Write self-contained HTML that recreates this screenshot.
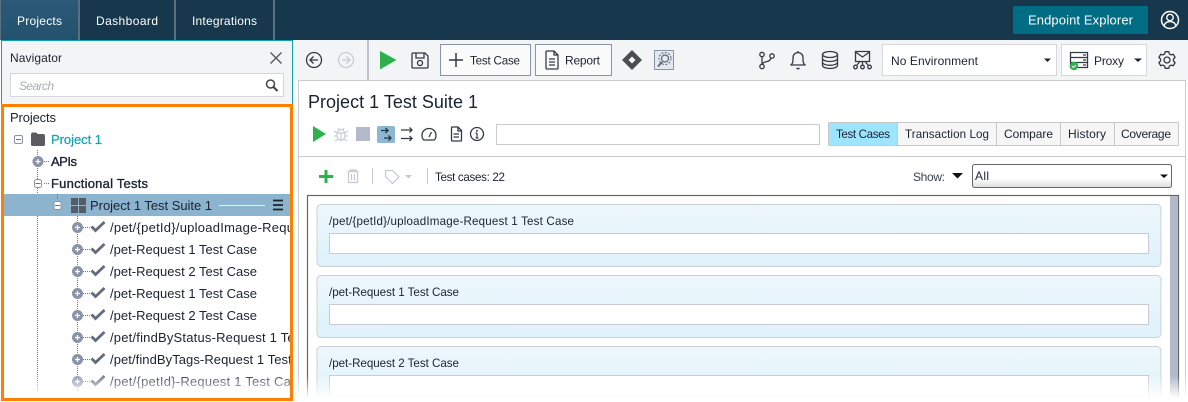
<!DOCTYPE html>
<html><head><meta charset="utf-8"><style>
html,body{margin:0;padding:0;background:#fff;width:1188px;height:402px;overflow:hidden}
svg{display:block}
text{font-family:"Liberation Sans",sans-serif;font-size:12px;fill:#1c2230}
.w{fill:#fff}.t{font-size:13px}
.s{font-size:11.6px}
.k{fill:none;stroke:#333a46;stroke-width:1.3}
.d{fill:none;stroke:#777;stroke-width:1;stroke-dasharray:1 1}
.c{fill:none;stroke:#636b7c;stroke-width:2.8}
.p{fill:#8a93a8}
.l{stroke:#fff;stroke-width:1.2;fill:none}
.card{fill:url(#cg);stroke:#ccd0d4}
.in{fill:#fff;stroke:#c8ccd0}
</style></head><body>
<svg width="1188" height="402" viewBox="0 0 1188 402" xmlns="http://www.w3.org/2000/svg">
<defs>
<linearGradient id="cg" x1="0" y1="0" x2="0" y2="1"><stop offset="0" stop-color="#edf7fc"/><stop offset="1" stop-color="#dff1fa"/></linearGradient>
<linearGradient id="tg" x1="0" y1="0" x2="0" y2="1"><stop offset="0" stop-color="#2a5a78"/><stop offset="1" stop-color="#24526e"/></linearGradient>
<linearGradient id="fd" x1="0" y1="0" x2="0" y2="1"><stop offset="0" stop-color="#fff" stop-opacity="0"/><stop offset="1" stop-color="#fff"/></linearGradient>
<linearGradient id="sel" x1="0" y1="0" x2="0" y2="1"><stop offset="0" stop-color="#fff"/><stop offset=".6" stop-color="#fff"/><stop offset="1" stop-color="#dcdcdc"/></linearGradient>
<clipPath id="tc"><rect x="4" y="107" width="286" height="291"/></clipPath>
</defs>

<!-- top bar -->
<rect width="1188" height="40" fill="#17384c"/>
<rect x="1" y="0" width="77" height="40" fill="url(#tg)"/>
<rect x="0" y="0" width="1" height="40" fill="#5a7080"/>
<rect x="78" y="0" width="2" height="40" fill="#5a7080"/>
<rect x="174" y="0" width="2" height="40" fill="#5a7080"/>
<rect x="273" y="0" width="2" height="40" fill="#5a7080"/>
<text class="w" x="17" y="25" textLength="45">Projects</text>
<text class="w" x="96" y="25" textLength="62">Dashboard</text>
<text class="w" x="192" y="25" textLength="65">Integrations</text>
<rect x="1013" y="6" width="135" height="28" rx="2" fill="#006d85"/>
<text class="w" x="1028" y="24.500" textLength="105" style="font-size:13px">Endpoint Explorer</text>
<circle cx="1170" cy="20" r="8.500" fill="none" stroke="#fff" stroke-width="1.500"/>
<circle cx="1170" cy="17.500" r="3.200" fill="none" stroke="#fff" stroke-width="1.400"/>
<path d="M1164 26c1-3.500 3-4.500 6-4.500s5 1 6 4.500" fill="none" stroke="#fff" stroke-width="1.400"/>

<!-- navigator -->
<rect x="1.500" y="40.500" width="291" height="70" fill="#f3f4f6" stroke="#12a0a8"/>
<text x="10" y="62" textLength="52">Navigator</text>
<path d="M270.500 52.500l11 11M281.500 52.500l-11 11" stroke="#555" stroke-width="1.300" fill="none"/>
<rect x="10.500" y="73.500" width="273" height="23" fill="#fff" stroke="#d4d6da"/>
<text x="19" y="90" textLength="35" style="font-style:italic;fill:#a8acb4">Search</text>
<circle cx="270.500" cy="84" r="4" fill="none" stroke="#444" stroke-width="1.500"/>
<path d="M273.500 87l4 4" stroke="#444" stroke-width="2"/>

<!-- tree panel -->
<rect x="2.500" y="105.500" width="289" height="294" fill="#fff" stroke="#ff7f00" stroke-width="3"/>
<g clip-path="url(#tc)">
<text class="t" x="10" y="122" textLength="46">Projects</text>
<path class="d" d="M37.500 150V392M57.500 194V216M77.500 216V392M44 161.500h6M44 183.500h6M63 205.500h5M83 227.500h7M83 249.500h7M83 271.500h7M83 293.500h7M83 315.500h7M83 337.500h7M83 359.500h7M83 381.500h7"/>
<rect x="14.500" y="135.500" width="8" height="8" rx="1.500" fill="#fff" stroke="#8a93a8"/><path d="M16 139.500h5" stroke="#6c7486"/>
<path d="M31 134.500q0-2 2-2h2.500q1.500 0 2 1.500h5.500q2 0 2 2v8.500q0 1.500-1.500 1.500h-11q-1.500 0-1.500-1.500z" fill="#5c5c60"/>
<text class="t" x="51" y="144" textLength="51" style="fill:#12a4b8;stroke:#12a4b8;stroke-width:.25">Project 1</text>

<circle class="p" cx="38" cy="161.500" r="5.500"/><path class="l" d="M35.500 161.500h5M38 159v5"/>
<text class="t" x="51" y="166" textLength="26" style="stroke:#1c2230;stroke-width:.35">APIs</text>
<rect x="34.500" y="179.500" width="7" height="8" rx="2" fill="#fff" stroke="#8a93a8"/><path d="M35.500 183.500h5" stroke="#6c7486"/>
<text class="t" x="51" y="188" textLength="97" style="stroke:#1c2230;stroke-width:.35">Functional Tests</text>

<rect x="4" y="194" width="286" height="22" fill="#8cb4cf"/>
<path class="d" d="M57.500 194V200"/>
<rect x="54" y="201.500" width="7" height="8" rx="1.500" fill="#fff" stroke="#8a93a8"/><path d="M55 205.500h5" stroke="#6c7486"/>
<path d="M71 198h7v7h-7zM79 198h7v7h-7zM71 206h7v7h-7zM79 206h7v7h-7z" fill="#555c68"/>
<text class="t" x="90" y="210" textLength="122">Project 1 Test Suite 1</text>
<rect x="219" y="205" width="46" height="1" fill="#e8f0f5"/>
<path d="M273 200.500h10M273 205h10M273 209.500h10" stroke="#222" stroke-width="1.700"/>

<circle class="p" cx="77.500" cy="227.500" r="5.500"/><path class="l" d="M75 227.500h5M77.500 225v5"/>
<path class="c" d="M91.500 226.500l4 4 9-8.500"/>
<text class="t" x="110" y="232" textLength="277">/pet/{petId}/uploadImage-Request 1 Test Case</text>
<circle class="p" cx="77.500" cy="249.500" r="5.500"/><path class="l" d="M75 249.500h5M77.500 247v5"/>
<path class="c" d="M91.500 248.500l4 4 9-8.500"/>
<text class="t" x="110" y="254" textLength="147">/pet-Request 1 Test Case</text>
<circle class="p" cx="77.500" cy="271.500" r="5.500"/><path class="l" d="M75 271.500h5M77.500 269v5"/>
<path class="c" d="M91.500 270.500l4 4 9-8.500"/>
<text class="t" x="110" y="276" textLength="147">/pet-Request 2 Test Case</text>
<circle class="p" cx="77.500" cy="293.500" r="5.500"/><path class="l" d="M75 293.500h5M77.500 291v5"/>
<path class="c" d="M91.500 292.500l4 4 9-8.500"/>
<text class="t" x="110" y="298" textLength="147">/pet-Request 1 Test Case</text>
<circle class="p" cx="77.500" cy="315.500" r="5.500"/><path class="l" d="M75 315.500h5M77.500 313v5"/>
<path class="c" d="M91.500 314.500l4 4 9-8.500"/>
<text class="t" x="110" y="320" textLength="147">/pet-Request 2 Test Case</text>
<circle class="p" cx="77.500" cy="337.500" r="5.500"/><path class="l" d="M75 337.500h5M77.500 335v5"/>
<path class="c" d="M91.500 336.500l4 4 9-8.500"/>
<text class="t" x="110" y="342" textLength="230">/pet/findByStatus-Request 1 Test Case</text>
<circle class="p" cx="77.500" cy="359.500" r="5.500"/><path class="l" d="M75 359.500h5M77.500 357v5"/>
<path class="c" d="M91.500 358.500l4 4 9-8.500"/>
<text class="t" x="110" y="364" textLength="216">/pet/findByTags-Request 1 Test Case</text>
<circle class="p" cx="77.500" cy="381.500" r="5.500"/><path class="l" d="M75 381.500h5M77.500 379v5"/>
<path class="c" d="M91.500 380.500l4 4 9-8.500"/>
<text class="t" x="110" y="386" textLength="195">/pet/{petId}-Request 1 Test Case</text>
<rect x="4" y="372" width="286" height="26" fill="url(#fd)"/>
</g>

<!-- main toolbar -->
<rect x="293" y="40" width="895" height="40" fill="#f3f4f6"/>
<rect x="367.500" y="40" width="1" height="40" fill="#8a93a8"/>
<circle class="k" cx="314" cy="60" r="7.500"/><path class="k" d="M318 60h-7.500M313.500 56.500l-3.500 3.500 3.500 3.500"/>
<circle cx="346" cy="60" r="7.500" fill="none" stroke="#c8ccd6" stroke-width="1.300"/><path d="M342 60h7.500M346.500 56.500l3.500 3.500-3.500 3.500" fill="none" stroke="#c8ccd6" stroke-width="1.300"/>
<path d="M380 51l16.500 9-16.500 9.500z" fill="#2bb24c"/>
<path class="k" d="M413 53h12l3 3v11q0 1-1 1h-14q-1 0-1-1V54q0-1 1-1zM416 53v5h8v-5"/><circle class="k" cx="420" cy="63" r="2.500"/>
<rect x="440.500" y="44.500" width="90" height="31" fill="#fbfbfc" stroke="#8a94a8"/>
<path d="M456 53v14M449 60h14" stroke="#333a46" stroke-width="1.500"/>
<text class="s" x="470" y="64.500" textLength="50">Test Case</text>
<rect x="535.500" y="44.500" width="76" height="31" fill="#fbfbfc" stroke="#8a94a8"/>
<path class="k" d="M546 52q0-1 1-1h7l4 4v13q0 1-1 1h-10q-1 0-1-1zM554 51v4h4M549 59h6M549 62h6M549 65h6"/>
<text x="565" y="64.500" textLength="35">Report</text>
<path d="M632 50l10 10-10 10-10-10z" fill="#4d4d50"/><path d="M632 56.500l3.500 3.500-3.500 3.500-3.500-3.500z" fill="#f3f4f6"/>
<rect x="654.500" y="50.500" width="19" height="19" fill="#e3e8ee" stroke="#8a94a8"/>
<circle cx="665" cy="58.500" r="3.500" fill="none" stroke="#5c6472" stroke-width="1.200"/><circle cx="665" cy="58.500" r="6" fill="none" stroke="#5c6472" stroke-width="1" stroke-dasharray="2 1.500"/><path d="M662 62l-4 4.500" stroke="#5c6472" stroke-width="1.800"/>

<circle class="k" cx="762" cy="54.500" r="2.200"/><circle class="k" cx="772" cy="56" r="2.200"/><circle class="k" cx="762" cy="66.500" r="2.200"/>
<path class="k" d="M762 57v7M771 58q-1 3-4 3.500t-5 2.500"/>
<path class="k" d="M790.500 65q2.500-1 2.500-5v-2q0-5 5-5.500 5 .5 5 5.500v2q0 4 2.500 5zM796.500 68q1.500 1.500 3 0M798 51v1.500"/>
<ellipse class="k" cx="830" cy="54.500" rx="7.500" ry="3"/><path class="k" d="M822.500 54.500v11c0 1.700 3.400 3 7.500 3s7.500-1.300 7.500-3v-11M822.500 58.500c0 1.700 3.400 3 7.500 3s7.500-1.300 7.500-3M822.500 62.300c0 1.700 3.400 3 7.500 3s7.500-1.300 7.500-3"/>
<path class="k" d="M855.500 51.500h14v10h-14zM855.500 52l7 5 7-5M862.500 61.500v4M857 65l3-3.500M868 65l-3-3.500"/><circle class="k" cx="855.500" cy="67" r="1.800"/><circle class="k" cx="862.500" cy="67" r="1.800"/><circle class="k" cx="869.500" cy="67" r="1.800"/>

<rect x="882.500" y="44.500" width="174" height="31" fill="#fff" stroke="#d5d9de"/>
<text x="891" y="65" textLength="87">No Environment</text>
<path d="M1044 58.500h7l-3.500 3.500z" fill="#222"/>
<rect x="1061.500" y="44.500" width="85" height="31" fill="#fff" stroke="#d5d9de"/>
<path class="k" d="M1070.500 52.500h17v15h-17zM1070.500 57.500h17M1070.500 62.500h17M1083 55h3M1083 60h3M1083 65h3"/>
<circle cx="1074" cy="66" r="4.200" fill="#2bb24c"/><path d="M1072 66l1.500 1.500 2.500-2.500" stroke="#fff" stroke-width="1" fill="none"/>
<text x="1094" y="65" textLength="30">Proxy</text>
<path d="M1134 58.500h8l-4 3.500z" fill="#222"/>
<circle class="k" cx="1167" cy="60" r="3"/>
<path class="k" stroke-linejoin="round" transform="translate(1167 60)" d="M2.430-6.030L1.770-8.310L-1.770-8.310L-2.430-6.030L-4-5.120L-6.320-5.690L-8.080-2.630L-6.440-.9L-6.440.9L-8.080 2.630L-6.320 5.690L-4 5.120L-2.430 6.030L-1.770 8.310L1.770 8.310L2.430 6.030L4 5.120L6.320 5.690L8.080 2.630L6.440.9L6.440-.9L8.080-2.630L6.320-5.690L4-5.120Z"/>

<!-- main panel -->
<rect x="298.500" y="80.500" width="887" height="322" fill="#fff" stroke="#ccc"/>
<text x="308" y="108" textLength="170" style="font-size:18px;fill:#1a2230">Project 1 Test Suite 1</text>
<path d="M313 126l13 8-13 8z" fill="#2bb24c"/>
<g fill="none" stroke="#c8ccd6" stroke-width="1.200"><ellipse cx="341" cy="135" rx="4" ry="5.500"/><path d="M338 128l1.500 2M344 128l-1.500 2M334 131l3 2M348 131l-3 2M334 136h3M348 136h-3M335 141l3-2M347 141l-3-2M337 133h8M341 133v7"/></g>
<rect x="356" y="127" width="14" height="14" fill="#b4bac9"/>
<rect x="377" y="126" width="18" height="17" rx="2" fill="#8cb8d4"/>
<path class="k" d="M381 130.500h7M385.500 128l2.500 2.500-2.500 2.500M384 138h7M388.500 135.500l2.500 2.500-2.500 2.500" style="stroke:#2a3340"/>
<path class="k" d="M401 130h11M409.500 127.500l2.500 2.500-2.500 2.500M401 138.500h11M409.500 136l2.500 2.500-2.500 2.500"/>
<path class="k" d="M424 140q-2-1-2-5a7 6.500 0 0 1 14 0q0 4-2 5zM429 137l2.500-5"/>
<path class="k" d="M451.500 128q0-1 1-1h5.500l3.500 3.500V140q0 1-1 1h-8q-1 0-1-1zM458 127v4h3.500M453.500 134h5.500M453.500 137h5.500"/>
<circle class="k" cx="477" cy="134" r="6.500"/><path d="M477 133v5M475.500 138h3M475.500 133h1.500" stroke="#333a46" stroke-width="1.200"/><circle cx="477" cy="130.700" r="1" fill="#333a46"/>
<rect x="496.500" y="124.500" width="323" height="20" fill="#fff" stroke="#ccc"/>

<!-- tabs -->
<rect x="828.500" y="122.500" width="350" height="23" rx="1" fill="#f6f6f6" stroke="#c8c8c8"/>
<rect x="829" y="123" width="68" height="22" fill="#9de4ff"/>
<path d="M897.500 122v23M996.500 122v23M1060.500 122v23M1114.500 122v23" stroke="#c8c8c8"/>
<text class="s" x="836" y="138" textLength="54">Test Cases</text>
<text class="s" x="905" y="138" textLength="84">Transaction Log</text>
<text x="1004" y="138" textLength="49">Compare</text>
<text x="1068" y="138" textLength="38">History</text>
<text x="1121" y="138" textLength="50">Coverage</text>
<rect x="299" y="156" width="886" height="1" fill="#ccc"/>

<!-- list toolbar -->
<path d="M326 170v13M319 176.500h14" stroke="#2bb24c" stroke-width="3"/>
<path d="M347.500 171.500h11M350 171.500v-1.500h6v1.500M348.500 172v10.500h9V172M351.500 174v6.500M354.500 174v6.500" fill="none" stroke="#c4c8d0" stroke-width="1.200"/>
<rect x="372" y="168" width="1" height="16" fill="#ccc"/>
<path d="M385.500 170.500h7l6.500 6.500-6.500 6.500-7-7z" fill="none" stroke="#c4c8d0" stroke-width="1.200"/>
<path d="M405 175h7l-3.500 3.500z" fill="#c4c8d0"/>
<rect x="427" y="168" width="1" height="16" fill="#ccc"/>
<text class="s" x="435" y="181" textLength="70">Test cases: 22</text>
<text x="913" y="181" textLength="32" style="fill:#3a4250">Show:</text>
<path d="M952 173h11l-5.500 5.500z" fill="#111"/>
<rect x="972.500" y="164.500" width="199" height="23" rx="2" fill="url(#sel)" stroke="#666"/>
<text x="975" y="180" textLength="14">All</text>
<path d="M1160 174.500h8l-4 3.500z" fill="#111"/>

<!-- list -->
<rect x="307.500" y="195.500" width="871" height="207" fill="#fff" stroke="#666" stroke-width="1.200"/>
<rect x="1170" y="196" width="8" height="206" fill="#b2bac8"/>
<rect class="card" x="317" y="204.500" width="844" height="62" rx="4"/>
<text class="s" x="329" y="225" textLength="245">/pet/{petId}/uploadImage-Request 1 Test Case</text>
<rect class="in" x="329.500" y="233.500" width="819" height="20"/>
<rect class="card" x="317" y="275.500" width="844" height="62" rx="4"/>
<text class="s" x="329" y="296" textLength="130">/pet-Request 1 Test Case</text>
<rect class="in" x="329.500" y="304.500" width="819" height="20"/>
<rect class="card" x="317" y="346.500" width="844" height="62" rx="4"/>
<text class="s" x="329" y="367" textLength="130">/pet-Request 2 Test Case</text>
<rect class="in" x="329.500" y="375.500" width="819" height="20"/>
<rect x="293" y="376" width="895" height="22" fill="url(#fd)"/>
<rect x="293" y="398" width="895" height="4" fill="#fff"/>
<rect x="0" y="401" width="1" height="1" fill="#fff"/>
</svg>
</body></html>
